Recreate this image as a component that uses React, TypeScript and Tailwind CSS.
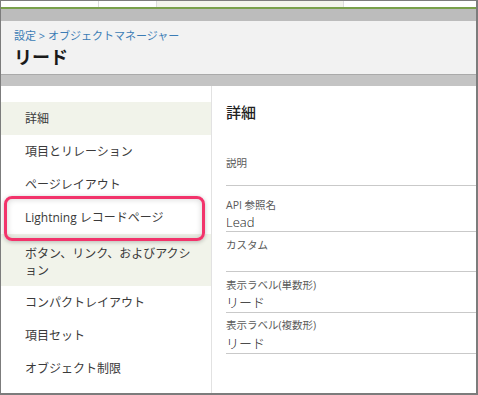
const font = { fontFamily: '"Open Sans", "Noto Sans CJK JP", sans-serif' };

const navItems = [
  "詳細",
  "項目とリレーション",
  "ページレイアウト",
  "Lightning レコードページ",
  "ボタン、リンク、およびアクション",
  "コンパクトレイアウト",
  "項目セット",
  "オブジェクト制限",
];

type Field = { label: string; value?: string; rowCls: string; valueCls?: string };

const fields: Field[] = [
  { label: "説明", rowCls: "h-[40px] pt-[10px]" },
  { label: "API 参照名", value: "Lead", rowCls: "h-[46px] pt-[12px]", valueCls: "mt-[1px]" },
  { label: "カスタム", rowCls: "h-[40px] pt-[6px]" },
  { label: "表示ラベル(単数形)", value: "リード", rowCls: "h-[41px] pt-[6px]", valueCls: "mt-[1px]" },
  { label: "表示ラベル(複数形)", value: "リード", rowCls: "h-[41px] pt-[5px]", valueCls: "mt-[2px]" },
];

function NavItem({ label, index }: { label: string; index: number }) {
  if (index === 4) {
    return (
      <div className="bg-[#f1f3ea] pl-6 pr-4 pt-[11px] h-[52px] text-[12px] leading-[17px] text-[#3a3a3a]">
        ボタン、リンク、およびアクシ
        <br />
        ョン
      </div>
    );
  }
  return (
    <div
      className={`h-[33px] flex items-center pl-6 text-[12px] text-[#3a3a3a] ${
        index === 0 ? "bg-[#f1f3ea]" : ""
      }`}
    >
      {label}
    </div>
  );
}

function FieldRow({ f }: { f: Field }) {
  return (
    <div className={`border-b border-[#c9c9c9] ${f.rowCls}`}>
      <div className="text-[10.5px] leading-[14px] text-[#5a5a5a]">{f.label}</div>
      {f.value && (
        <div className={`text-[13px] leading-[19px] text-[#222] font-light ${f.valueCls}`}>{f.value}</div>
      )}
    </div>
  );
}

export default function App() {
  return (
    <div
      className="w-[478px] h-[395px] bg-white border-l border-t border-r-2 border-b-2 border-[#7c7c7c] flex flex-col overflow-hidden"
      style={font}
    >
      {/* tab strip */}
      <div className="h-[6px] flex">
        <div className="w-[98px] border-r border-[#dcdcdc]" />
        <div className="w-[58px] border-r border-[#dcdcdc]" />
        <div className="w-[187px] bg-[#f3f4ec] border-r border-[#dcdcdc]" />
        <div className="flex-1" />
      </div>
      <div className="h-[2px] bg-[#79a04b]" />
      <div className="h-[12px] bg-[#bcbcbc]" />

      {/* header */}
      <div className="h-[53px] bg-[#f2f2f2] pl-[13px] pt-[8px]">
        <div className="text-[11px] leading-[14px] text-[#3b7cb5]">
          設定 &gt; オブジェクトマネージャー
        </div>
        <div className="text-[18px] leading-[24px] font-bold text-[#1a1a1a] mt-[2px]">リード</div>
      </div>
      <div className="h-[12px] bg-[#c4c4c4] border-t border-[#aaaaaa]" />

      {/* body */}
      <div className="flex-1 flex">
        <div className="relative w-[211px] border-r border-[#e2e2e2] pt-[16px]">
          {navItems.map((n, i) => (
            <NavItem key={n} label={n} index={i} />
          ))}
          <div className="absolute left-[3px] top-[110px] w-[201px] h-[45px] rounded-[8px] border-[3px] border-[#f2336b] shadow-[0_1px_4px_rgba(0,0,0,0.25),inset_0_0_6px_rgba(0,0,0,0.18)]" />
        </div>
        <div className="flex-1 pl-[14px]">
          <div className="text-[15px] leading-[20px] font-medium text-[#222] pt-[16px] h-[60px]">詳細</div>
          {fields.map((f) => (
            <FieldRow key={f.label} f={f} />
          ))}
        </div>
      </div>
    </div>
  );
}
